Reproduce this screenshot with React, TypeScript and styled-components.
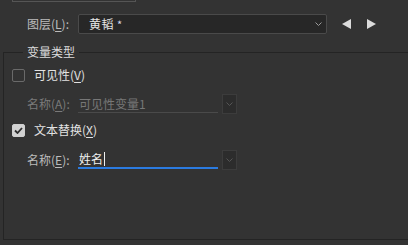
import React from "react";
import styled, { createGlobalStyle } from "styled-components";

const Global = createGlobalStyle`
  html, body { margin: 0; padding: 0; background: #333333; }
  body { font-family: "Noto Sans CJK SC", "Noto Sans", sans-serif; font-size: 12px; color: #c8c8c8; }
`;

const Root = styled.div`
  width: 408px;
  height: 245px;
  overflow: hidden;
  background: #333333;
  display: flex;
  flex-direction: column;
`;

const TopStub = styled.div`
  margin-left: 12px;
  width: 124px;
  height: 2px;
  box-sizing: border-box;
  border: 1px solid #555555;
  border-top: none;
`;

const Row = styled.div<{ $top: number; $left: number; $h?: number }>`
  display: flex;
  align-items: center;
  margin-top: ${(p) => p.$top}px;
  padding-left: ${(p) => p.$left}px;
  height: ${(p) => p.$h ?? 20}px;
`;

const Label = styled.span<{ $w: number; $dim?: boolean }>`
  width: ${(p) => p.$w}px;
  flex: none;
  line-height: 16px;
  white-space: nowrap;
  color: ${(p) => (p.$dim ? "#7a7a7a" : "#bcbcbc")};
  u { text-underline-offset: 2px; }
`;

const Combo = styled.div`
  width: 249px;
  height: 20px;
  box-sizing: border-box;
  border: 1px solid #4a4a4a;
  border-radius: 2px;
  background: #272727;
  display: flex;
  align-items: center;
  padding: 0 4px 0 10px;
  color: #e6e6e6;
`;

const ComboText = styled.span`
  flex: 1;
  line-height: 16px;
  letter-spacing: 0.5px;
`;

const Star = styled.span`
  font-size: 11px;
  color: #d8d8e8;
  margin-left: 3px;
`;

const ArrowBtn = styled.button<{ $ml: number }>`
  margin-left: ${(p) => p.$ml}px;
  padding: 0;
  border: none;
  background: none;
  display: flex;
  width: 9px;
  height: 10px;
`;

const Group = styled.section`
  margin: 18px 0 0 3px;
  width: 430px;
  height: 188px;
  flex: none;
  box-sizing: border-box;
  border: 1px solid #242424;
  padding: 0 0 0 8px;
  display: flex;
  flex-direction: column;
  align-items: flex-start;
`;

const Legend = styled.div`
  margin: -8px 0 0 11px;
  padding: 0 4px;
  height: 14px;
  line-height: 14px;
  background: #333333;
  color: #dcdcdc;
`;

const CheckRow = styled.label<{ $top: number }>`
  display: flex;
  align-items: center;
  margin-top: ${(p) => p.$top}px;
  height: 16px;
  color: #e2e2e2;
  line-height: 16px;
  u { text-underline-offset: 2px; }
`;

const Box = styled.span<{ $checked?: boolean }>`
  width: 13px;
  height: 13px;
  box-sizing: border-box;
  border-radius: 2px;
  border: 1px solid ${(p) => (p.$checked ? "#cfcfcf" : "#6a6a6a")};
  background: ${(p) => (p.$checked ? "#d2d2d2" : "transparent")};
  margin-right: 9px;
  display: flex;
  align-items: center;
  justify-content: center;
`;

const FieldRow = styled.div<{ $top: number }>`
  display: flex;
  align-items: center;
  margin-top: ${(p) => p.$top}px;
  padding-left: 15px;
  height: 20px;
`;

const Field = styled.div<{ $active?: boolean }>`
  width: 140px;
  height: 18px;
  box-sizing: border-box;
  border-bottom: ${(p) => (p.$active ? "2px solid #2b7be0" : "1px solid #4a4a4a")};
  display: flex;
  align-items: center;
  color: ${(p) => (p.$active ? "#f0f0f0" : "#777777")};
  line-height: 16px;
  padding-left: 1px;
`;

const Caret = styled.span`
  display: inline-block;
  width: 1px;
  height: 14px;
  background: #f0f0f0;
  margin-left: 1px;
`;

const DropBtn = styled.div`
  width: 15px;
  height: 20px;
  margin-left: 4px;
  box-sizing: border-box;
  border: 1px solid #3c3c3c;
  background: #2c2c2c;
  display: flex;
  align-items: center;
  justify-content: center;
`;

const Chevron = ({ color }: { color: string }) => (
  <svg width="7" height="4" viewBox="0 0 7 4">
    <path d="M0.5 0.5 L3.5 3.5 L6.5 0.5" stroke={color} strokeWidth="1" fill="none" />
  </svg>
);

export default function App() {
  return (
    <Root>
      <Global />
      <TopStub />
      <Row $top={12} $left={27}>
        <Label $w={51}>
          图层(<u>L</u>):
        </Label>
        <Combo>
          <ComboText>
            黄韬<Star>*</Star>
          </ComboText>
          <Chevron color="#9a9a9a" />
        </Combo>
        <ArrowBtn $ml={15}>
          <svg width="9" height="10" viewBox="0 0 9 10">
            <path d="M9 0 L0 5 L9 10 Z" fill="#dcdcdc" />
          </svg>
        </ArrowBtn>
        <ArrowBtn $ml={16}>
          <svg width="9" height="10" viewBox="0 0 9 10">
            <path d="M0 0 L9 5 L0 10 Z" fill="#dcdcdc" />
          </svg>
        </ArrowBtn>
      </Row>
      <Group>
        <Legend>变量类型</Legend>
        <CheckRow $top={8}>
          <Box />
          可见性(<u>V</u>)
        </CheckRow>
        <FieldRow $top={11}>
          <Label $w={51} $dim>
            名称(<u>A</u>):
          </Label>
          <Field>可见性变量1</Field>
          <DropBtn>
            <Chevron color="#555555" />
          </DropBtn>
        </FieldRow>
        <CheckRow $top={8}>
          <Box $checked>
            <svg width="9" height="7" viewBox="0 0 9 7">
              <path d="M1 3.5 L3.5 6 L8 1" stroke="#2e2e2e" strokeWidth="1.8" fill="none" />
            </svg>
          </Box>
          文本替换(<u>X</u>)
        </CheckRow>
        <FieldRow $top={12}>
          <Label $w={51}>
            名称(<u>E</u>):
          </Label>
          <Field $active>
            姓名<Caret />
          </Field>
          <DropBtn>
            <Chevron color="#555555" />
          </DropBtn>
        </FieldRow>
      </Group>
    </Root>
  );
}
